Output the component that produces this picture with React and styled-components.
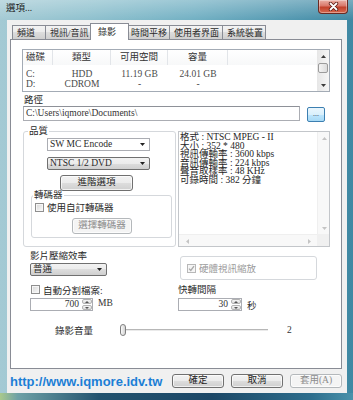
import React from "react";
import styled, { createGlobalStyle, css } from "styled-components";

const GlobalStyle = createGlobalStyle`
  html, body { margin: 0; padding: 0; }
  body { width: 353px; height: 400px; overflow: hidden; background: #fff; }
  * { box-sizing: border-box; }
`;

const uiFont = `"Liberation Serif", "Noto Sans CJK TC", serif`;

const Window = styled.div`
  width: 353px;
  height: 400px;
  display: flex;
  flex-direction: column;
  font-family: ${uiFont};
  font-size: 9.5px;
  color: #2a2a2a;
  background:
    linear-gradient(to bottom, rgba(255, 255, 255, 0.3), rgba(255, 255, 255, 0) 20px),
    linear-gradient(to right, #a4cad4 0%, #8fc1ce 25%, #72b0c3 55%, #4f95ae 85%, #3f88a3 100%);
`;

const TitleBar = styled.div`
  height: 20px;
  flex: none;
  display: flex;
  justify-content: space-between;
  align-items: flex-start;
  padding: 0 5px 0 6px;
`;

const Title = styled.span`
  margin-top: 3px;
  line-height: 11px;
  color: #1a1a1a;
`;

const CloseButton = styled.div`
  width: 30px;
  height: 14px;
  border: 1px solid #6b2a22;
  border-top: none;
  border-radius: 0 0 4px 4px;
  background: linear-gradient(to bottom, #eab0a6 0%, #d9786a 45%, #c2412b 55%, #d66a50 100%);
  box-shadow: inset 0 0 0 1px rgba(255, 255, 255, 0.35);
  display: flex;
  align-items: center;
  justify-content: center;
`;

const Client = styled.div`
  flex: 1;
  margin: 0 6px 0 7px;
  background: #f0f0f0;
  display: flex;
  flex-direction: column;
  padding: 3px 5px 0 3px;
`;

const BottomFrame = styled.div`
  height: 7px;
  flex: none;
  background: linear-gradient(to right, #a9c98c 0%, #6ea1a6 5%, #23536f 28%, #1c4766 60%, #2d6d8c 88%, #4a92ab 100%);
`;

const TabStrip = styled.div`
  height: 16px;
  flex: none;
  display: flex;
  align-items: flex-end;
  padding-left: 3px;
`;

const Tab = styled.div`
  width: ${(p) => p.$w}px;
  height: 14px;
  margin-left: -1px;
  padding: 1px 0 0 4px;
  font-size: 9px;
  line-height: 13px;
  white-space: nowrap;
  overflow: hidden;
  border: 1px solid #898c95;
  border-bottom: none;
  background: linear-gradient(#f3f3f3, #ebebeb 50%, #dddddd 50%, #cfcfcf);
  ${(p) =>
    p.$active &&
    css`
      height: 17px;
      margin: 0 -2px -1px -2px;
      padding: 1px 0 0 7px;
      line-height: 14px;
      background: #fff;
      position: relative;
      z-index: 1;
    `}
`;

const Panel = styled.div`
  height: 330px;
  flex: none;
  border: 1px solid #898c95;
  background: #fff;
  padding: 9px 0 0 12px;
`;

const Footer = styled.div`
  flex: 1;
  display: flex;
  align-items: center;
  justify-content: space-between;
`;

const SiteLink = styled.a`
  font-family: "Liberation Sans", Arial, sans-serif;
  font-weight: bold;
  font-size: 13px;
  line-height: 1;
  color: #1c7fd6;
  text-decoration: none;
`;

const ButtonGroup = styled.div`
  display: flex;
  gap: 7px;
`;

const Button = styled.button`
  flex: none;
  width: ${(p) => p.$w}px;
  height: ${(p) => p.$h || 14}px;
  margin: ${(p) => p.$mt || 0}px 0 0 ${(p) => p.$indent || 0}px;
  padding: 0;
  font: inherit;
  line-height: 1;
  color: ${(p) => (p.disabled ? "#8c8c8c" : "#1e1e1e")};
  border: 1px solid ${(p) => (p.disabled ? "#b4b8bb" : "#707070")};
  border-radius: 3px;
  background: ${(p) =>
    p.disabled ? "#f4f4f4" : "linear-gradient(#f2f2f2 0%, #ebebeb 50%, #dddddd 51%, #cfcfcf 100%)"};
  box-shadow: inset 0 0 0 1px rgba(255, 255, 255, 0.7);
`;

const BrowseButton = styled.button`
  flex: none;
  width: 18px;
  height: 15px;
  margin: 1px 0 0 7px;
  padding: 0 0 3px;
  font: inherit;
  font-size: 8px;
  line-height: 1;
  color: #333;
  border: 1px solid #3c7fb1;
  border-radius: 2px;
  background: linear-gradient(#eaf6fd 0%, #d9f0fc 50%, #bee6fd 51%, #a7d9f5 100%);
  display: flex;
  align-items: flex-end;
  justify-content: center;
`;

/* drive list */

const ListView = styled.div`
  width: 308px;
  height: 43px;
  margin-left: -1px;
  border: 1px solid #a3abb5;
  display: flex;
`;

const ListMain = styled.div`
  flex: 1;
  display: flex;
  flex-direction: column;
`;

const ListHeader = styled.div`
  height: 15px;
  display: flex;
  background: linear-gradient(#ffffff, #f7f8f9);
`;

const HeaderCell = styled.div`
  width: ${(p) => p.$w}px;
  flex: none;
  border-right: 1px solid #e2e5e9;
  line-height: 15px;
  text-align: ${(p) => p.$align || "center"};
  padding-left: ${(p) => (p.$align === "left" ? 3 : 0)}px;
  color: #333;
`;

const HeaderFill = styled.div`
  flex: 1;
`;

const ListBody = styled.div`
  padding-top: 4px;
`;

const ListRow = styled.div`
  display: flex;
  height: 10px;
  line-height: 10px;
  color: #4a4a4a;
`;

const Cell = styled.div`
  width: ${(p) => p.$w}px;
  flex: none;
  text-align: ${(p) => p.$align || "center"};
  padding-left: ${(p) => (p.$align === "left" ? 3 : 0)}px;
`;

const ListScroll = styled.div`
  width: 12px;
  flex: none;
  display: flex;
  flex-direction: column;
  background: linear-gradient(to right, #e6e6e6, #f6f6f6);
`;

const ScrollArrow = styled.div`
  width: ${(p) => p.$size || 12}px;
  height: ${(p) => p.$size || 12}px;
  flex: none;
  display: flex;
  align-items: center;
  justify-content: center;
  margin-top: ${(p) => (p.$push ? "auto" : 0)};
`;

const ScrollThumb = styled.div`
  height: 10px;
  margin: 1px 1px 0;
  border: 1px solid #9b9b9b;
  border-radius: 2px;
  background: linear-gradient(to right, #f4f4f4, #dcdcdc);
`;

/* path */

const FieldLabel = styled.div`
  line-height: 10px;
  margin: ${(p) => p.$mt || 0}px 0 0 ${(p) => p.$indent || 0}px;
  color: ${(p) => (p.$muted ? "#9a9a9a" : "#2a2a2a")};
  white-space: nowrap;
`;

const PathRow = styled.div`
  display: flex;
  align-items: flex-start;
  margin-top: 1px;
`;

const TextInput = styled.div`
  width: 277px;
  height: 15px;
  border: 1px solid #abadb3;
  border-top-color: #8e9198;
  background: #fff;
  padding-left: 2px;
  line-height: 13px;
  color: #333;
`;

/* middle grid */

const Grid = styled.div`
  display: grid;
  grid-template-columns: 153px 152px;
  column-gap: 2px;
  row-gap: 4px;
  align-items: start;
  margin-top: 4px;
`;

const Group = styled.fieldset`
  width: ${(p) => p.$w}px;
  margin: ${(p) => p.$mt || 0}px 0 0 ${(p) => p.$indent || 0}px;
  padding: 1px 0 ${(p) => p.$pb || 0}px;
  border: 1px solid #d5d8dc;
  border-radius: 3px;
  display: flex;
  flex-direction: column;
  align-items: flex-start;
  min-inline-size: 0;
`;

const Legend = styled.legend`
  margin-left: ${(p) => p.$indent || 4}px;
  padding: 0 1px;
  line-height: 11px;
  color: #2a2a2a;
`;

const Select = styled.div`
  width: ${(p) => p.$w}px;
  height: 13px;
  flex: none;
  margin: ${(p) => p.$mt || 0}px 0 0 ${(p) => p.$indent || 0}px;
  padding: 0 4px 0 2px;
  display: flex;
  align-items: center;
  justify-content: space-between;
  line-height: 11px;
  color: #2a2a2a;
  border: 1px solid ${(p) => (p.$list ? "#707070" : "#abadb3")};
  border-radius: ${(p) => (p.$list ? 2 : 0)}px;
  background: ${(p) =>
    p.$list ? "linear-gradient(#f2f2f2, #ebebeb 50%, #dddddd 50%, #cfcfcf)" : "#fff"};
`;

const CheckRow = styled.div`
  display: flex;
  align-items: center;
  gap: 3px;
  height: ${(p) => p.$h || 11}px;
  margin: ${(p) => p.$mt || 0}px 0 0 ${(p) => p.$indent || 0}px;
  color: ${(p) => (p.$disabled ? "#9a9a9a" : "#2a2a2a")};
  white-space: nowrap;
`;

const CheckBox = styled.span`
  width: 9px;
  height: 9px;
  flex: none;
  border: 1px solid ${(p) => (p.$disabled ? "#b8b8b8" : "#8f8f8f")};
  background: ${(p) =>
    p.$disabled ? "#f4f4f4" : "linear-gradient(135deg, #d6d6d6, #fbfbfb)"};
  box-shadow: inset 0 0 0 1px #f6f6f6;
  display: inline-flex;
  align-items: center;
  justify-content: center;
`;

const InfoBox = styled.div`
  width: 152px;
  height: 116px;
  margin-top: 5px;
  border: 1px solid #c3c6ca;
  background: #fff;
  display: grid;
  grid-template-columns: 1fr 12px;
  grid-template-rows: 1fr 12px;
`;

const InfoText = styled.div`
  padding: 1px 0 0 1px;
  line-height: 8.5px;
  color: #262626;
  white-space: pre;
  overflow: hidden;
`;

const VScroll = styled.div`
  display: flex;
  flex-direction: column;
  background: #f8f8f8;
  border-left: 1px solid #efefef;
`;

const HScroll = styled.div`
  display: flex;
  justify-content: space-between;
  padding: 0 2px;
  background: #f8f8f8;
  border-top: 1px solid #efefef;
`;

const Corner = styled.div`
  background: #f0f0f0;
`;

const Cell2 = styled.div`
  display: flex;
  flex-direction: column;
  align-items: flex-start;
`;

const HardwareBox = styled.div`
  width: 137px;
  height: 24px;
  margin: 5px 0 0 2px;
  padding-left: 6px;
  border: 1px solid #d5d8dc;
  border-radius: 3px;
  display: flex;
  align-items: center;
`;

const SpinRow = styled.div`
  display: flex;
  align-items: ${(p) => p.$unitAlign || "flex-start"};
  margin: ${(p) => p.$mt || 0}px 0 0 ${(p) => p.$indent || 0}px;
`;

const Spinner = styled.div`
  width: ${(p) => p.$w}px;
  height: 13px;
  display: flex;
  border: 1px solid #abadb3;
  background: #fff;
`;

const SpinValue = styled.span`
  flex: 1;
  text-align: right;
  padding-right: 2px;
  line-height: 11px;
  color: #333;
`;

const SpinButtons = styled.div`
  width: 11px;
  display: flex;
  flex-direction: column;
  gap: 1px;
  padding: 0 0 0 1px;
`;

const SpinHalf = styled.div`
  flex: 1;
  display: flex;
  align-items: center;
  justify-content: center;
  border: 1px solid #b3b3b3;
  border-radius: 2px;
  background: linear-gradient(#f5f5f5, #dcdcdc);
`;

const Unit = styled.span`
  margin-left: 5px;
  line-height: 10px;
  color: #333;
`;

/* volume */

const VolumeRow = styled.div`
  display: grid;
  grid-template-columns: 65px 148px auto;
  align-items: center;
  height: 12px;
  margin: 12px 0 0 32px;
`;

const SliderTrack = styled.div`
  height: 12px;
  display: flex;
  align-items: center;
  background: linear-gradient(
    to bottom,
    transparent 5px,
    #b7b7b7 5px,
    #b7b7b7 6px,
    #eaeaea 6px,
    #eaeaea 7px,
    transparent 7px
  );
`;

const SliderThumb = styled.div`
  width: 6px;
  height: 12px;
  border: 1px solid #7f7f7f;
  border-radius: 3px;
  background: linear-gradient(to right, #fafafa, #d2d2d2);
`;

const VolumeValue = styled.span`
  padding-left: 19px;
  color: #333;
`;

const Triangle = ({ dir = "down", color = "#222", w = 5, h = 3 }) => {
  const pts = {
    down: `0,0 ${w},0 ${w / 2},${h}`,
    up: `0,${h} ${w},${h} ${w / 2},0`,
  };
  if (dir === "left" || dir === "right") {
    const p = dir === "left" ? `${h},0 ${h},${w} 0,${w / 2}` : `0,0 0,${w} ${h},${w / 2}`;
    return (
      <svg width={h} height={w} viewBox={`0 0 ${h} ${w}`}>
        <polygon points={p} fill={color} />
      </svg>
    );
  }
  return (
    <svg width={w} height={h} viewBox={`0 0 ${w} ${h}`}>
      <polygon points={pts[dir]} fill={color} />
    </svg>
  );
};

const CheckMark = ({ color }) => (
  <svg width="7" height="7" viewBox="0 0 7 7">
    <path d="M1 3.6 L2.8 5.4 L6 1.2" fill="none" stroke={color} strokeWidth="1.3" />
  </svg>
);

const tabs = [
  { label: "頻道", w: 34 },
  { label: "視訊/音訊", w: 47 },
  { label: "錄影", w: 39, active: true },
  { label: "時間平移", w: 44 },
  { label: "使用者界面", w: 54 },
  { label: "系統裝置", w: 44 },
];

const columns = [
  { key: "name", title: "磁碟", w: 30, align: "left" },
  { key: "type", title: "類型", w: 58 },
  { key: "free", title: "可用空間", w: 57 },
  { key: "size", title: "容量", w: 60 },
];

const drives = [
  { name: "C:", type: "HDD", free: "11.19 GB", size: "24.01 GB" },
  { name: "D:", type: "CDROM", free: "-", size: "-" },
];

const info = [
  "格式 : NTSC MPEG - II",
  "大小 : 352 * 480",
  "視訊傳輸率 : 3600 kbps",
  "音訊傳輸率 : 224 kbps",
  "聲音取樣率 : 48 KHz",
  "可錄時間 : 382 分鐘",
];

function Spin({ value, w }) {
  return (
    <Spinner $w={w}>
      <SpinValue>{value}</SpinValue>
      <SpinButtons>
        <SpinHalf>
          <Triangle dir="up" color="#555" w={4} h={2} />
        </SpinHalf>
        <SpinHalf>
          <Triangle dir="down" color="#555" w={4} h={2} />
        </SpinHalf>
      </SpinButtons>
    </Spinner>
  );
}

export default function App() {
  return (
    <>
      <GlobalStyle />
      <Window>
        <TitleBar>
          <Title>選項...</Title>
          <CloseButton>
            <svg width="11" height="9" viewBox="0 0 11 9">
              <path d="M2.5 1.5 L8.5 7.5 M8.5 1.5 L2.5 7.5" stroke="#5c1a12" strokeWidth="3.4" strokeLinecap="round" />
              <path d="M2.5 1.5 L8.5 7.5 M8.5 1.5 L2.5 7.5" stroke="#ffffff" strokeWidth="1.8" strokeLinecap="round" />
            </svg>
          </CloseButton>
        </TitleBar>

        <Client>
          <TabStrip>
            {tabs.map((t) => (
              <Tab key={t.label} $w={t.w} $active={t.active}>
                {t.label}
              </Tab>
            ))}
          </TabStrip>

          <Panel>
            <ListView>
              <ListMain>
                <ListHeader>
                  {columns.map((c) => (
                    <HeaderCell key={c.key} $w={c.w} $align={c.align}>
                      {c.title}
                    </HeaderCell>
                  ))}
                  <HeaderFill />
                </ListHeader>
                <ListBody>
                  {drives.map((d) => (
                    <ListRow key={d.name}>
                      {columns.map((c) => (
                        <Cell key={c.key} $w={c.w} $align={c.align}>
                          {d[c.key]}
                        </Cell>
                      ))}
                    </ListRow>
                  ))}
                </ListBody>
              </ListMain>
              <ListScroll>
                <ScrollArrow>
                  <Triangle dir="up" color="#3c3c3c" />
                </ScrollArrow>
                <ScrollThumb />
                <ScrollArrow $push>
                  <Triangle dir="down" color="#3c3c3c" />
                </ScrollArrow>
              </ListScroll>
            </ListView>

            <FieldLabel $mt={3} $indent={1}>路徑</FieldLabel>
            <PathRow>
              <TextInput>C:\Users\iqmore\Documents\</TextInput>
              <BrowseButton>...</BrowseButton>
            </PathRow>

            <Grid>
              <Group $w={153} $pb={8}>
                <Legend>品質</Legend>
                <Select $w={103} $indent={23}>
                  <span>SW MC Encode</span>
                  <Triangle />
                </Select>
                <Select $w={103} $indent={23} $mt={6} $list>
                  <span>NTSC 1/2 DVD</span>
                  <Triangle />
                </Select>
                <Button $w={73} $h={16} $indent={36} $mt={5}>
                  進階選項
                </Button>
                <Group $w={141} $indent={7} $mt={-1} $pb={3}>
                  <Legend $indent={1}>轉碼器</Legend>
                  <CheckRow $h={10} $indent={3}>
                    <CheckBox />
                    使用自訂轉碼器
                  </CheckRow>
                  <Button $w={60} $h={16} $indent={40} $mt={6} disabled>
                    選擇轉碼器
                  </Button>
                </Group>
              </Group>

              <InfoBox>
                <InfoText>{info.join("\n")}</InfoText>
                <VScroll>
                  <ScrollArrow>
                    <Triangle dir="up" color="#c4c4c4" />
                  </ScrollArrow>
                  <ScrollArrow $push>
                    <Triangle dir="down" color="#c4c4c4" />
                  </ScrollArrow>
                </VScroll>
                <HScroll>
                  <ScrollArrow>
                    <Triangle dir="left" color="#c4c4c4" />
                  </ScrollArrow>
                  <ScrollArrow>
                    <Triangle dir="right" color="#c4c4c4" />
                  </ScrollArrow>
                </HScroll>
                <Corner />
              </InfoBox>

              <Cell2>
                <FieldLabel $indent={7}>影片壓縮效率</FieldLabel>
                <Select $w={77} $indent={7} $mt={2} $list>
                  <span>普通</span>
                  <Triangle />
                </Select>
              </Cell2>

              <HardwareBox>
                <CheckRow $disabled>
                  <CheckBox $disabled>
                    <CheckMark color="#a8a8a8" />
                  </CheckBox>
                  硬體視訊縮放
                </CheckRow>
              </HardwareBox>

              <Cell2>
                <CheckRow $indent={8}>
                  <CheckBox />
                  自動分割檔案:
                </CheckRow>
                <SpinRow $mt={3} $indent={7}>
                  <Spin value="700" w={63} />
                  <Unit>MB</Unit>
                </SpinRow>
              </Cell2>

              <Cell2>
                <FieldLabel $mt={1}>快轉間隔</FieldLabel>
                <SpinRow $mt={3} $unitAlign="flex-end">
                  <Spin value="30" w={64} />
                  <Unit>秒</Unit>
                </SpinRow>
              </Cell2>
            </Grid>

            <VolumeRow>
              <span>錄影音量</span>
              <SliderTrack>
                <SliderThumb />
              </SliderTrack>
              <VolumeValue>2</VolumeValue>
            </VolumeRow>
          </Panel>

          <Footer>
            <SiteLink href="#">http://www.iqmore.idv.tw</SiteLink>
            <ButtonGroup>
              <Button $w={52}>確定</Button>
              <Button $w={52}>取消</Button>
              <Button $w={52} disabled>
                套用(A)
              </Button>
            </ButtonGroup>
          </Footer>
        </Client>
        <BottomFrame />
      </Window>
    </>
  );
}
